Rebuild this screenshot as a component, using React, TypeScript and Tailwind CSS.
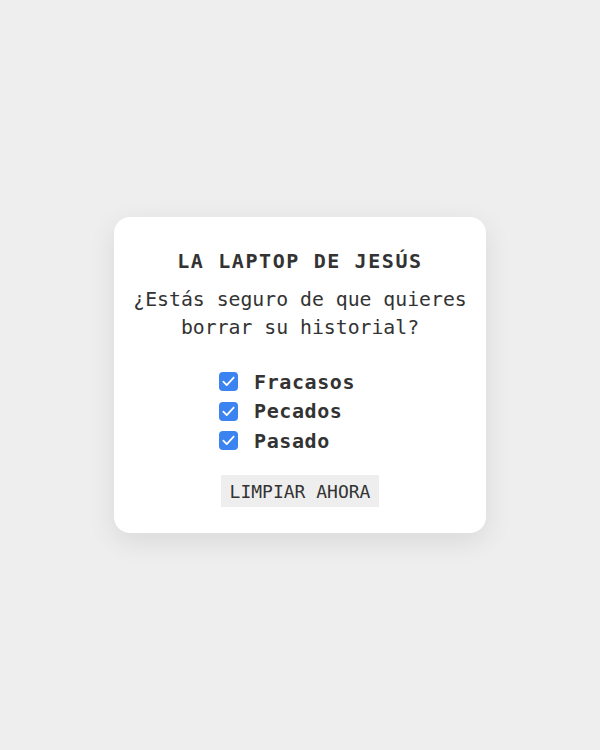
import React, { useState } from 'react';

const ITEMS = ['Fracasos', 'Pecados', 'Pasado'];

function CheckRow({ label, checked, onToggle }: { label: string; checked: boolean; onToggle: () => void }) {
  return (
    <label className="flex h-[29.5px] items-center gap-[16px] cursor-pointer" onClick={onToggle}>
      <span
        className={`flex h-[19px] w-[19px] items-center justify-center rounded-[4px] ${
          checked ? 'bg-[#3a83f1]' : 'border border-gray-400 bg-white'
        }`}
      >
        {checked && (
          <svg viewBox="0 0 16 16" className="h-[15px] w-[15px]" fill="none" stroke="white" strokeWidth="1.9" strokeLinecap="round" strokeLinejoin="round">
            <path d="M2.5 8.2l3.6 3.6L13.5 3.8" />
          </svg>
        )}
      </span>
      <span className="text-[20px] font-semibold tracking-[0.03em] text-[#333]">{label}</span>
    </label>
  );
}

export default function App() {
  const [checked, setChecked] = useState<Record<string, boolean>>({
    Fracasos: true,
    Pecados: true,
    Pasado: true,
  });

  return (
    <div className="flex h-[750px] w-full items-center justify-center bg-[#eeeeee] font-['DejaVu_Sans_Mono',monospace]">
      <div className="flex w-[372px] flex-col items-center rounded-[16px] bg-white px-2 pt-[30px] pb-[26px] shadow-[0_8px_28px_rgba(0,0,0,0.09)]">
        <h1 className="text-[20px] leading-[28px] font-bold tracking-[0.08em] text-[#333]">LA LAPTOP DE JESÚS</h1>
        <p className="mt-[11px] whitespace-nowrap text-center text-[19.8px] leading-[28px] text-[#333]">
          ¿Estás seguro de que quieres
          <br />
          borrar su historial?
        </p>
        <div className="mt-[25px] flex w-[162px] flex-col">
          {ITEMS.map((item) => (
            <CheckRow
              key={item}
              label={item}
              checked={checked[item]}
              onToggle={() => setChecked({ ...checked, [item]: !checked[item] })}
            />
          ))}
        </div>
        <button className="mt-[20px] h-[32px] w-[158px] bg-[#eeeeee] text-[18px] text-[#333]">LIMPIAR AHORA</button>
      </div>
    </div>
  );
}
